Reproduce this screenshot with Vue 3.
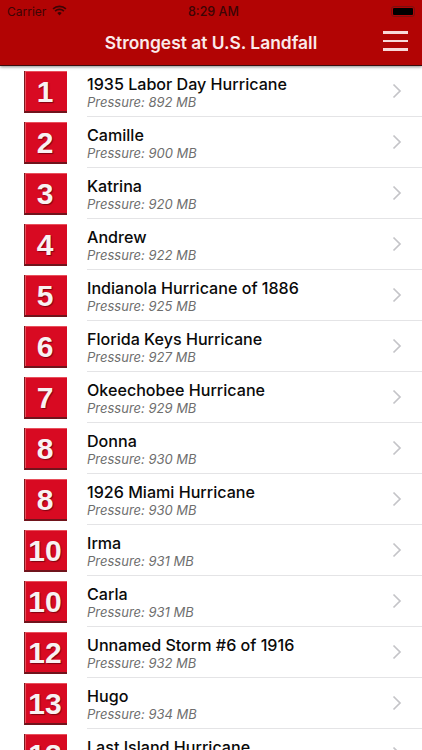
<script setup>
const storms = [
  { rank: 1, name: '1935 Labor Day Hurricane', mb: 892 },
  { rank: 2, name: 'Camille', mb: 900 },
  { rank: 3, name: 'Katrina', mb: 920 },
  { rank: 4, name: 'Andrew', mb: 922 },
  { rank: 5, name: 'Indianola Hurricane of 1886', mb: 925 },
  { rank: 6, name: 'Florida Keys Hurricane', mb: 927 },
  { rank: 7, name: 'Okeechobee Hurricane', mb: 929 },
  { rank: 8, name: 'Donna', mb: 930 },
  { rank: 8, name: '1926 Miami Hurricane', mb: 930 },
  { rank: 10, name: 'Irma', mb: 931 },
  { rank: 10, name: 'Carla', mb: 931 },
  { rank: 12, name: 'Unnamed Storm #6 of 1916', mb: 932 },
  { rank: 13, name: 'Hugo', mb: 934 },
  { rank: 13, name: 'Last Island Hurricane', mb: 934 },
]
</script>

<template>
  <div class="screen">
    <header class="head">
      <div class="status">
        <div class="carrier">
          <span>Carrier</span>
          <svg class="wifi" viewBox="0 0 16 12" width="15" height="11">
            <path d="M8 11.500 5.600 8.600a3.600 3.600 0 0 1 4.800 0z" fill="#3c0505" />
            <path d="M1 4.200a10.400 10.400 0 0 1 14 0M3.200 6.600a7.200 7.200 0 0 1 9.600 0" fill="none" stroke="#3c0505" stroke-width="1.800" />
          </svg>
        </div>
        <span class="time">8:29 AM</span>
        <div class="battery"><i></i></div>
      </div>
      <div class="nav">
        <h1>Strongest at U.S. Landfall</h1>
        <div class="burger"><i></i><i></i><i></i></div>
      </div>
    </header>
    <ul class="list">
      <li v-for="(s, i) in storms" :key="i" class="row">
        <div class="badge">{{ s.rank }}</div>
        <div class="body">
          <div class="text">
            <div class="name">{{ s.name }}</div>
            <div class="sub">Pressure: {{ s.mb }} MB</div>
          </div>
          <svg class="chev" viewBox="0 0 10 16" width="10" height="16">
            <path d="M1.500 1.500 8 8l-6.500 6.500" fill="none" stroke="#c4c4c8" stroke-width="1.700" />
          </svg>
        </div>
      </li>
    </ul>
  </div>
</template>

<style>
html, body { margin: 0; background: #fff; }
</style>

<style scoped>
.screen {
  width: 422px;
  height: 750px;
  overflow: hidden;
  background: #fff;
  font-family: Inter, "Liberation Sans", sans-serif;
  position: relative;
}
.head {
  height: 65px;
  background: #b20404;
  border-bottom: 1px solid #3a0d0d;
  box-shadow: 0 1px 3px rgba(0, 0, 0, .45);
  position: relative;
  z-index: 2;
  display: flex;
  flex-direction: column;
}
.status {
  height: 22px;
  display: flex;
  align-items: center;
  justify-content: space-between;
  padding: 0 7px;
  color: #3c0505;
  font-size: 12.500px;
  position: relative;
}
.carrier { display: flex; align-items: center; gap: 6px; font-size: 12px; }
.wifi { margin-top: -1px; }
.time { position: absolute; left: 188px; font-weight: 500; }
.battery {
  width: 24px;
  height: 11px;
  border: 1px solid #7a1010;
  border-radius: 3px;
  padding: 1px;
  box-sizing: border-box;
}
.battery i { display: block; height: 100%; background: #000; border-radius: 1px; }
.nav {
  flex: 1;
  display: flex;
  align-items: center;
  position: relative;
  padding-bottom: 3px;
}
.nav h1 {
  margin: 0;
  width: 422px;
  text-align: center;
  color: #fbeaea;
  font-size: 17.400px;
  font-weight: 600;
}
.burger {
  position: absolute;
  left: 383px;
  top: 9px;
  width: 25px;
  display: flex;
  flex-direction: column;
  gap: 6px;
}
.burger i { display: block; height: 2.500px; background: #f8d8d8; }
.list { margin: 0; padding: 0; list-style: none; }
.row {
  height: 51px;
  display: flex;
  align-items: center;
}
.badge {
  width: 43px;
  height: 42px;
  margin: 0 20px 0 24px;
  padding-right: 2px;
  flex: none;
  box-sizing: border-box;
  background: #d80a22;
  border-left: 1px solid #7a1a20;
  border-bottom: 2px solid #70141c;
  box-shadow: inset 1px 1px 0 #e8505c;
  color: #f8f2f2;
  font-family: "Liberation Sans", Arial, sans-serif;
  font-weight: 700;
  font-size: 30px;
  text-align: center;
  line-height: 41px;
  text-shadow: 1px 1px 1px rgba(90, 0, 10, .7);
}
.body {
  flex: 1;
  height: 51px;
  box-sizing: border-box;
  border-bottom: 1px solid #e4e4e6;
  display: flex;
  align-items: center;
  justify-content: space-between;
  padding-right: 20px;
}
.text { padding-top: 2px; }
.name { font-size: 16.100px; font-weight: 500; color: #0a0a0a; line-height: 20px; }
.sub { font-size: 13px; font-style: italic; color: #6e6e6e; line-height: 16px; }
</style>
